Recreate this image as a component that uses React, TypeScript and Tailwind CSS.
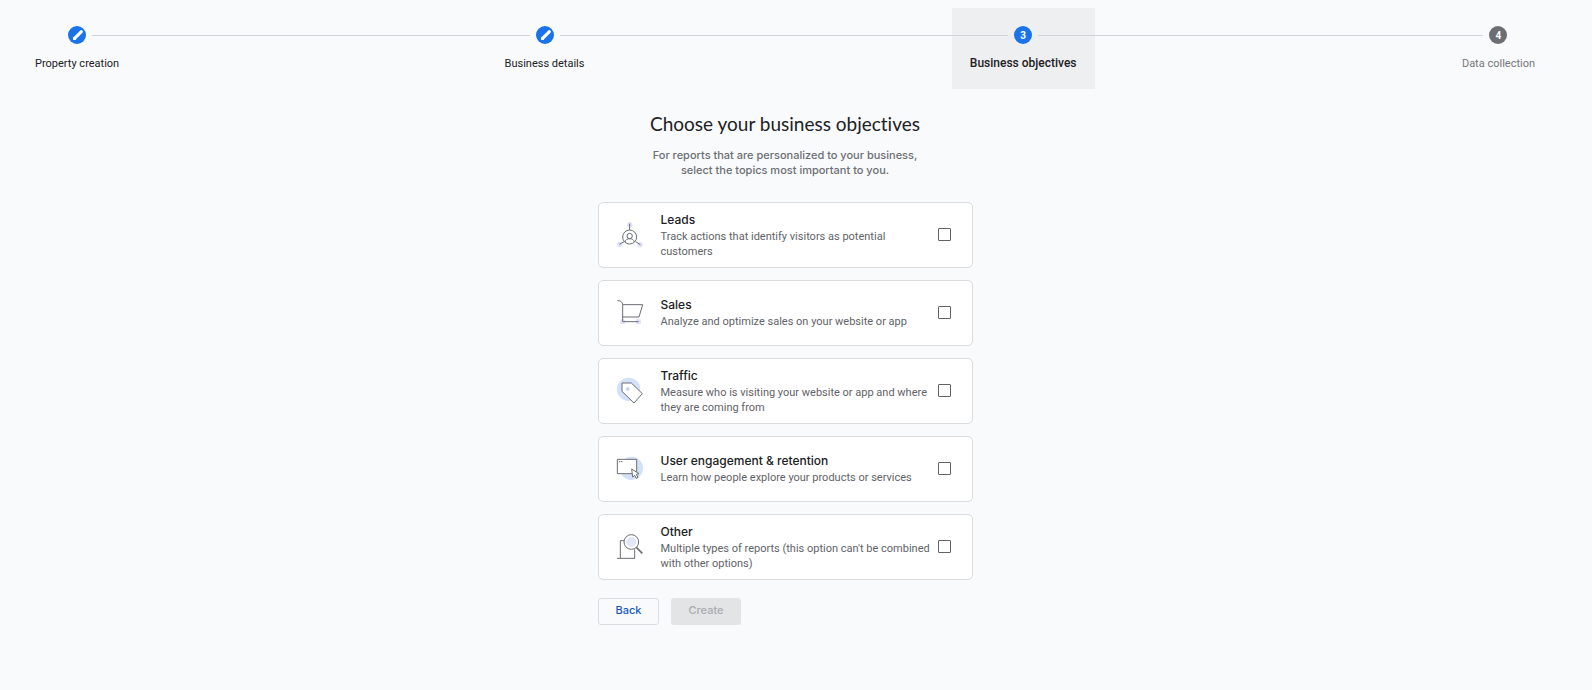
import React, { useState } from 'react';
import clsx from 'clsx';

type StepState = 'done' | 'active' | 'todo';

interface Step {
  label: string;
  state: StepState;
}

interface Objective {
  id: string;
  title: string;
  description: string;
  icon: React.ReactNode;
}

const STEPS: Step[] = [
  { label: 'Property creation', state: 'done' },
  { label: 'Business details', state: 'done' },
  { label: 'Business objectives', state: 'active' },
  { label: 'Data collection', state: 'todo' },
];

const IconBox = ({ children }: { children: React.ReactNode }) => (
  <svg viewBox="0 0 78 78" className="size-[26px] shrink-0 overflow-visible" fill="none" stroke="#6b6e73" strokeWidth="3" aria-hidden="true">
    {children}
  </svg>
);

const LeadsIcon = () => (
  <IconBox>
    <g fill="#dfe2fa" stroke="none">
      <circle cx="38" cy="8" r="8" />
      <circle cx="8" cy="67" r="8" />
      <circle cx="69" cy="68" r="8" />
    </g>
    <circle cx="38" cy="45" r="21" />
    <circle cx="38" cy="42" r="8" />
    <path d="M24 60c2-7 7-10 14-10s12 3 14 10M38 5v19M7 67l14-8M56 59l14 9" />
  </IconBox>
);

const SalesIcon = () => (
  <IconBox>
    <g fill="#dfe2fa" stroke="none">
      <circle cx="17" cy="65" r="8" />
      <circle cx="64" cy="65" r="8" />
    </g>
    <path d="M1 2c10-1 15 4 16 12v51h48M17 14h60L66 51H17" />
  </IconBox>
);

const TrafficIcon = () => (
  <IconBox>
    <circle cx="35" cy="34" r="35" fill="#d3e1f9" stroke="none" />
    <path d="M15 15h28l33 32-25 28-36-35z" fill="#fff" />
    <circle cx="32" cy="33" r="6" fill="#c5d6f6" stroke="none" />
  </IconBox>
);

const EngagementIcon = () => (
  <IconBox>
    <circle cx="43" cy="37" r="35" fill="#d3e1f4" stroke="none" />
    <path d="M1 10h58v43H1z" fill="#fff" />
    <path d="M6 17h4M12 17h4" />
    <path d="M44 39l3 24 6-5 5 9 5-3-5-9 8-2z" fill="#fff" />
  </IconBox>
);

const OtherIcon = () => (
  <IconBox>
    <path d="M22 20H10v53M0 73h54M53 46v27" />
    <circle cx="43" cy="24" r="22" fill="#fff" />
    <circle cx="43" cy="24" r="15" fill="#e3e8f8" stroke="none" />
    <path d="M58 40l18 18" strokeWidth="5" />
  </IconBox>
);

const OBJECTIVES: Objective[] = [
  {
    id: 'leads',
    title: 'Leads',
    description: 'Track actions that identify visitors as potential customers',
    icon: <LeadsIcon />,
  },
  {
    id: 'sales',
    title: 'Sales',
    description: 'Analyze and optimize sales on your website or app',
    icon: <SalesIcon />,
  },
  {
    id: 'traffic',
    title: 'Traffic',
    description: 'Measure who is visiting your website or app and where they are coming from',
    icon: <TrafficIcon />,
  },
  {
    id: 'engagement',
    title: 'User engagement & retention',
    description: 'Learn how people explore your products or services',
    icon: <EngagementIcon />,
  },
  {
    id: 'other',
    title: 'Other',
    description: "Multiple types of reports (this option can't be combined with other options)",
    icon: <OtherIcon />,
  },
];

const Line = ({ hidden = false }: { hidden?: boolean }) => (
  <span className={clsx('h-px flex-1', hidden ? 'bg-transparent' : 'bg-[#d0d3d7]')} />
);

interface StepHeaderProps {
  step: Step;
  index: number;
}

const StepHeader = ({ step, index }: StepHeaderProps) => (
  <li
    className={clsx('flex flex-col items-center gap-[11px] pt-[18px] pb-[17px]', step.state === 'active' && 'bg-[#eeeff1]')}
    aria-current={step.state === 'active' ? 'step' : undefined}
  >
    <div className="flex w-full items-center gap-[6px]">
      <Line hidden={index === 0} />
      <span
        className={clsx(
          'flex size-[18px] items-center justify-center rounded-full text-[10px] font-bold text-white',
          step.state === 'todo' ? 'bg-[#6b6e72]' : 'bg-[#1a73e8]',
        )}
      >
        {step.state === 'done' ? (
          <svg viewBox="0 0 18 18" className="size-[18px]" aria-hidden="true">
            <path d="M6.6 12.4L11.4 7.6M12.5 6.5l.8-.8" stroke="#fff" strokeWidth="3.2" strokeLinecap="round" />
            <path d="M5.1 10.8v3.1h3.1z" fill="#fff" />
          </svg>
        ) : (
          index + 1
        )}
      </span>
      <Line hidden={index === STEPS.length - 1} />
    </div>
    <span
      className={clsx(
        'px-[18px] leading-[17px]',
        step.state === 'active' ? 'text-xs font-medium text-[#202124]' : 'text-[11px]',
        step.state === 'done' && 'text-[#202124]',
        step.state === 'todo' && 'text-[#74777b]',
      )}
    >
      {step.label}
    </span>
  </li>
);

interface ObjectiveCardProps {
  objective: Objective;
  checked: boolean;
  onToggle: (id: string) => void;
}

const ObjectiveCard = ({ objective, checked, onToggle }: ObjectiveCardProps) => (
  <label
    htmlFor={objective.id}
    className="flex min-h-[66px] cursor-pointer items-center rounded-[5px] border border-[#dadce0] bg-white pr-[21px] pl-[18px]"
  >
    {objective.icon}
    <span className="ml-[18px] flex flex-1 flex-col">
      <span className="pb-0.5 font-['Inter',sans-serif] text-xs leading-[15px] font-medium text-[#202124]">{objective.title}</span>
      <span className="text-[11px] leading-[15px] text-[#5f6368]">{objective.description}</span>
    </span>
    <input
      id={objective.id}
      type="checkbox"
      checked={checked}
      onChange={() => onToggle(objective.id)}
      className="mb-0.5 ml-1 size-[13px] shrink-0 appearance-none rounded-[1px] border border-[#5f6368] checked:border-[#1a73e8] checked:bg-[#1a73e8]"
    />
  </label>
);

export default function App() {
  const [selected, setSelected] = useState<string[]>([]);

  const toggle = (id: string) => {
    setSelected((prev) => {
      if (prev.includes(id)) return prev.filter((item) => item !== id);
      // "Other" can't be combined with the rest
      return id === 'other' ? ['other'] : [...prev.filter((item) => item !== 'other'), id];
    });
  };

  return (
    <div className="min-h-screen bg-[#f9fafc] pt-2 pr-[39px] pb-10 pl-[17px] font-['Roboto',sans-serif] text-[#202124]">
      <ol className="flex">
        {STEPS.map((step, index) => (
          <React.Fragment key={step.label}>
            {index > 0 && (
              <li className="flex h-[54px] flex-1 items-center" role="presentation">
                <Line />
              </li>
            )}
            <StepHeader step={step} index={index} />
          </React.Fragment>
        ))}
      </ol>

      <main className="mx-auto mt-[23px] max-w-[375px]">
        <h1 className="text-center font-['Lato',sans-serif] text-[19px] leading-6 [font-variant-ligatures:none]">
          Choose your business objectives
        </h1>
        <p className="mx-auto mt-3 max-w-[280px] text-center font-['Inter',sans-serif] text-[11px] leading-[15px] font-medium text-[#6b6f74]">
          For reports that are personalized to your business, select the topics most important to you.
        </p>

        <form className="mt-6" onSubmit={(e) => e.preventDefault()}>
          <div className="flex flex-col gap-3">
            {OBJECTIVES.map((objective) => (
              <ObjectiveCard
                key={objective.id}
                objective={objective}
                checked={selected.includes(objective.id)}
                onToggle={toggle}
              />
            ))}
          </div>

          <div className="mt-[18px] flex gap-3 font-['Inter',sans-serif] text-[11px] font-medium">
            <button type="button" className="h-[27px] rounded-[3px] border border-[#dadce0] px-[17px] pb-0.5 text-[#185abc]">
              Back
            </button>
            <button
              type="submit"
              disabled={selected.length === 0}
              className="h-[27px] rounded-[3px] bg-[#1a73e8] px-[17px] pb-0.5 text-white disabled:bg-[#e3e4e6] disabled:text-[#a8abaf]"
            >
              Create
            </button>
          </div>
        </form>
      </main>
    </div>
  );
}
